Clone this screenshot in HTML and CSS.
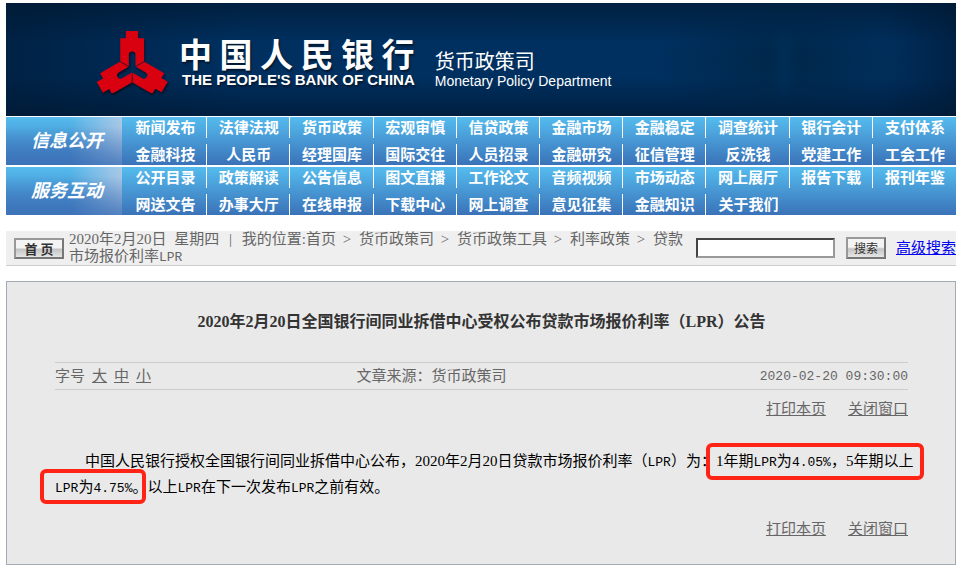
FILE: index.html
```html
<!DOCTYPE html>
<html lang="zh-CN">
<head>
<meta charset="utf-8">
<title>中国人民银行 货币政策司</title>
<link rel="stylesheet" href="styles.css">
</head>
<body>
<header class="banner">
  <svg class="emblem" viewBox="15 30 220 190" aria-hidden="true">
    <defs>
      <path id="arm" d="M105 33H142V55H160V124L134 139V105a10 10 0 0 0-20 0V139L88 124V55H105Z"/>
    </defs>
    <g fill="#d9000f">
      <use href="#arm"/>
      <use href="#arm" transform="rotate(120 124 146)"/>
      <use href="#arm" transform="rotate(240 124 146)"/>
    </g>
  </svg>
  <div class="bank">
    <div class="bank-zh">中 国 人 民 银 行</div>
    <div class="bank-en">THE PEOPLE'S BANK OF CHINA</div>
  </div>
  <div class="dept">
    <div class="dept-zh">货币政策司</div>
    <div class="dept-en">Monetary Policy Department</div>
  </div>
</header>

<nav class="menu">
  <section class="group">
    <h2>信息公开</h2>
    <ul>
      <li><a href="#">新闻发布</a></li><li><a href="#">法律法规</a></li><li><a href="#">货币政策</a></li><li><a href="#">宏观审慎</a></li><li><a href="#">信贷政策</a></li><li><a href="#">金融市场</a></li><li><a href="#">金融稳定</a></li><li><a href="#">调查统计</a></li><li><a href="#">银行会计</a></li><li><a href="#">支付体系</a></li>
      <li><a href="#">金融科技</a></li><li><a href="#">人民币</a></li><li><a href="#">经理国库</a></li><li><a href="#">国际交往</a></li><li><a href="#">人员招录</a></li><li><a href="#">金融研究</a></li><li><a href="#">征信管理</a></li><li><a href="#">反洗钱</a></li><li><a href="#">党建工作</a></li><li><a href="#">工会工作</a></li>
    </ul>
  </section>
  <section class="group">
    <h2>服务互动</h2>
    <ul>
      <li><a href="#">公开目录</a></li><li><a href="#">政策解读</a></li><li><a href="#">公告信息</a></li><li><a href="#">图文直播</a></li><li><a href="#">工作论文</a></li><li><a href="#">音频视频</a></li><li><a href="#">市场动态</a></li><li><a href="#">网上展厅</a></li><li><a href="#">报告下载</a></li><li><a href="#">报刊年鉴</a></li>
      <li><a href="#">网送文告</a></li><li><a href="#">办事大厅</a></li><li><a href="#">在线申报</a></li><li><a href="#">下载中心</a></li><li><a href="#">网上调查</a></li><li><a href="#">意见征集</a></li><li><a href="#">金融知识</a></li><li><a href="#">关于我们</a></li>
    </ul>
  </section>
</nav>

<div class="toolbar">
  <button class="btn home" type="button">首 页</button>
  <div class="crumbs">2020年2月20日 <span class="day">星期四</span> <span class="bar">|</span> 我的位置:首页 <span class="sep">&gt;</span> 货币政策司 <span class="sep">&gt;</span> 货币政策工具 <span class="sep">&gt;</span> 利率政策 <span class="sep">&gt;</span> 贷款市场报价利率<span class="mono">LPR</span></div>
  <form class="search">
    <input type="text" aria-label="搜索">
    <button class="btn go" type="button">搜索</button>
    <a href="#">高级搜索</a>
  </form>
</div>

<article class="notice">
  <h1>2020年2月20日全国银行间同业拆借中心受权公布贷款市场报价利率（LPR）公告</h1>
  <div class="meta">
    <div class="sizes">字号 <a href="#">大</a> <a href="#">中</a> <a href="#">小</a></div>
    <div>文章来源：货币政策司</div>
    <time class="mono">2020-02-20 09:30:00</time>
  </div>
  <div class="actions"><a href="#">打印本页</a><a href="#">关闭窗口</a></div>
  <p>中国人民银行授权全国银行间同业拆借中心公布，2020年2月20日贷款市场报价利率（<span class="mono">LPR</span>）为：<mark class="rate-one">1年期<span class="mono">LPR</span>为<span class="mono">4.05%</span>，5年期以上</mark><br><mark class="rate-five"><span class="mono">LPR</span>为<span class="mono">4.75%</span>。</mark>以上<span class="mono">LPR</span>在下一次发布<span class="mono">LPR</span>之前有效。</p>
  <div class="actions"><a href="#">打印本页</a><a href="#">关闭窗口</a></div>
</article>
</body>
</html>
```
FILE: styles.css
```css
* { box-sizing: border-box; }

body {
  margin: 0;
  padding: 3px 4px 3px 6px;
  background: #fff;
  color: #666;
  font: 15px/17px "Liberation Serif", "Noto Sans CJK SC", serif;
}

a { color: inherit; }

.mono { font-family: "Liberation Mono", monospace; font-size: 13px; }

/* Banner */
.banner {
  display: flex;
  height: 113px;
  padding-left: 90px;
  color: #fff;
  background:
    radial-gradient(ellipse 16px 40px at 778px 60px, rgba(0, 52, 100, .5), transparent),
    radial-gradient(ellipse 130px 70px at 778px 58px, rgba(0, 36, 66, .8), transparent),
    linear-gradient(to right, rgba(0, 24, 50, .6), transparent 25%, transparent 92%, rgba(0, 24, 50, .6)),
    linear-gradient(#00203f, #003060 35%, #003060 65%, #001f40);
}

.emblem {
  width: 73px;
  height: 63px;
  margin-top: 27px;
  filter: drop-shadow(1px 2px 1px rgba(0, 0, 0, .5));
}

.bank { margin: 32px 0 0 10px; white-space: nowrap; text-shadow: 1px 2px 2px #001830; }
.bank-zh { font: bold 33px/36px "Noto Sans CJK SC", sans-serif; }
.bank-en { padding-left: 3px; font: bold 15px/18px "Liberation Sans", sans-serif; }

.dept { margin: 46px 0 0 20px; white-space: nowrap; }
.dept-zh { font: 20px/24px "Noto Sans CJK SC", sans-serif; }
.dept-en { font: 14px/16px "Liberation Sans", sans-serif; }

/* Menu */
.menu { display: grid; gap: 2px; margin-top: 1px; }

.group {
  display: flex;
  color: #fff;
  background: linear-gradient(#55bcee, #3a72b8);
}

.group h2 {
  display: flex;
  align-items: center;
  justify-content: center;
  width: 116px;
  margin: 0;
  padding: 0 0 5px 6px;
  font: italic bold 18px/20px "Noto Sans CJK SC", sans-serif;
  background: linear-gradient(to top, rgba(62, 115, 185, .8), transparent 80%),
    linear-gradient(to right, transparent 55%, rgba(190, 205, 230, .8));
}

.group ul {
  flex: 1;
  display: grid;
  grid-template-columns: repeat(10, 1fr);
  row-gap: 6px;
  margin: 0;
  padding: 0 0 0 2px;
  list-style: none;
}

.group li {
  height: 21px;
  padding-left: 1px;
  border-right: 1px solid #fff;
  font: bold 15px/19px "Noto Sans CJK SC", sans-serif;
  text-align: center;
}

.group li:nth-child(10n), .group li:last-child { border-right: 0; }
.group a { text-decoration: none; }

/* Toolbar */
.toolbar {
  display: flex;
  align-items: flex-start;
  height: 35px;
  margin-top: 16px;
  padding-left: 8px;
  background: #efefef;
  border-bottom: 1px solid #ccc;
}

.btn {
  padding: 0;
  border: 2px solid #888;
  border-color: #999 #777 #777 #999;
  background: linear-gradient(#f4f4f4 45%, #c4c4c4 55%, #e6e6e6);
  color: #333;
  white-space: nowrap;
}

.home {
  width: 50px;
  height: 21px;
  margin: 7px 5px 0 0;
  font: bold 13px/15px "Noto Sans CJK SC", sans-serif;
}

.crumbs { flex: 1; }
.day { margin-left: 4px; }
.bar { margin: 0 6px; }
.sep { margin: 0 4px 0 3px; }

.search {
  display: flex;
  align-items: center;
  height: 34px;
  margin-left: 12px;
}

.search input {
  width: 139px;
  height: 20px;
  padding: 0 4px;
  border: 2px solid;
  border-color: #444 #999 #999 #444;
  background: #fff;
}

.go {
  width: 40px;
  height: 22px;
  margin: 0 10px 0 11px;
  font: 12px/16px "Noto Sans CJK SC", sans-serif;
}

.search a { color: #00e; white-space: nowrap; }

/* Notice */
.notice {
  margin-top: 15px;
  padding: 30px 47px 26px 48px;
  border: 1px solid #a2abb5;
  background: #e9e9e9;
}

.notice h1 {
  margin: 0 0 30px;
  color: #333;
  font-size: 16px;
  line-height: 20px;
  text-align: center;
  white-space: nowrap;
}

.meta {
  display: grid;
  grid-template-columns: 35% 1fr auto;
  column-gap: 3px;
  align-items: center;
  height: 28px;
  border: 1px solid #ccc;
  border-width: 1px 0;
}

.sizes { display: flex; gap: 7px; }

.actions {
  display: flex;
  justify-content: flex-end;
  gap: 22px;
  padding-top: 11px;
}

.notice p {
  margin: 31px 0 9px;
  color: #000;
  line-height: 25px;
  text-indent: 30px;
  white-space: nowrap;
}

mark {
  position: relative;
  display: inline-block;
  background: none;
  color: inherit;
  text-indent: 0;
}

mark::after {
  content: "";
  position: absolute;
  border: 4px solid #ff2415;
  border-radius: 6px;
}

.rate-one::after { inset: -6px -11px -5px -10px; }
.rate-five::after { inset: -6px 1px -3px -15px; }
```
